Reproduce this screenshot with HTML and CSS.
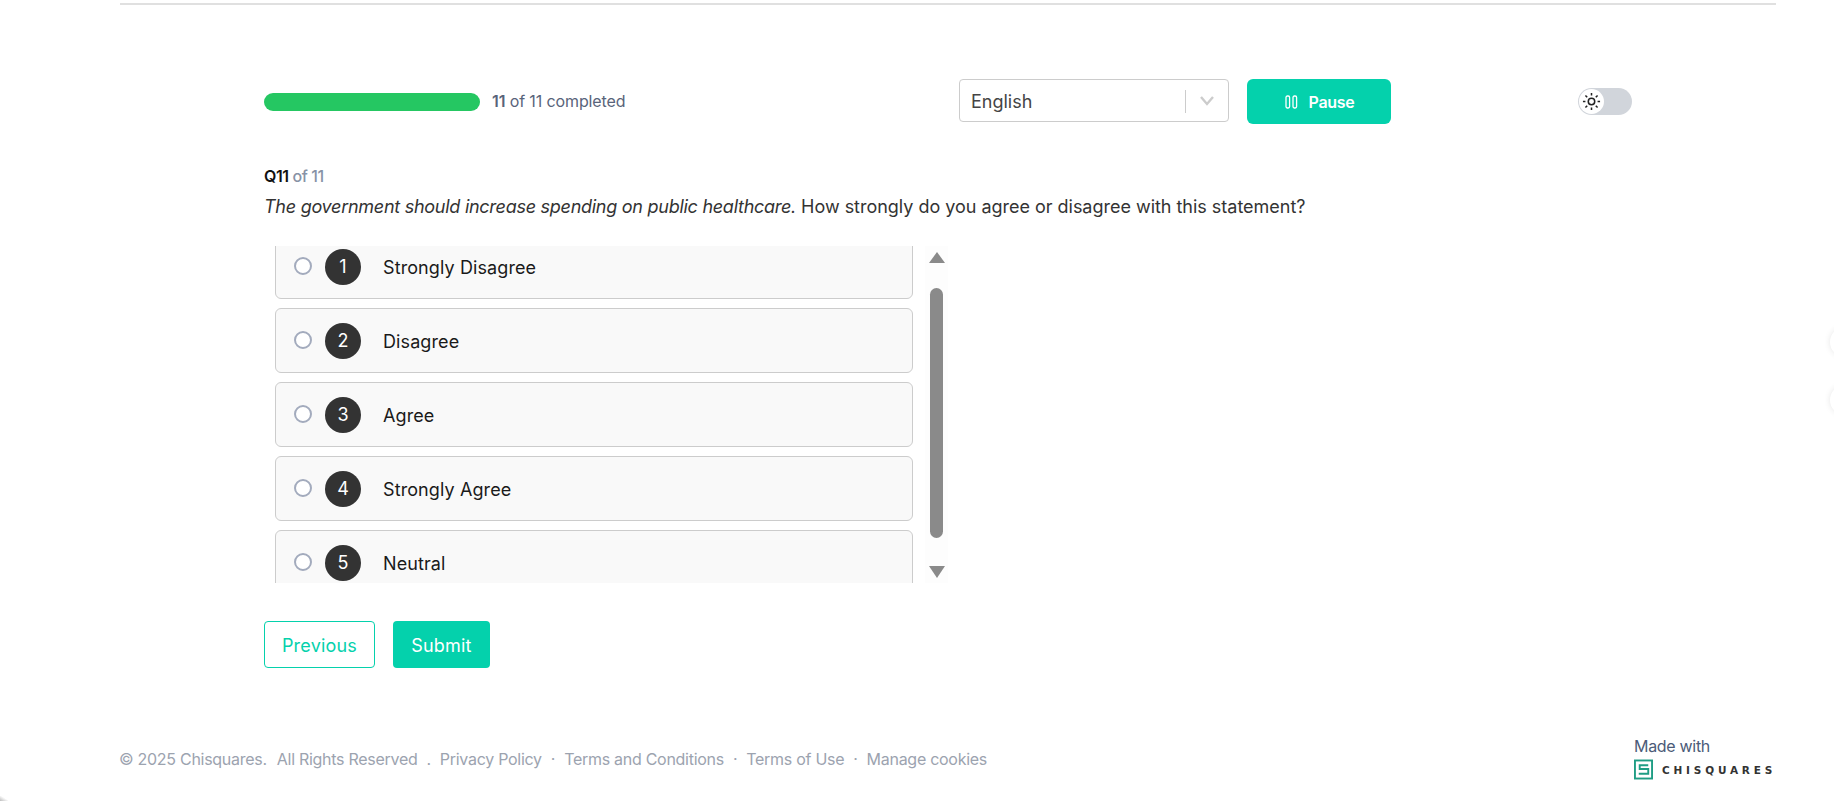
FILE: index.html
```html
<!DOCTYPE html>
<html lang="en">
<head>
    <meta charset="UTF-8">
    <title>Survey</title>
    <link rel="stylesheet" href="styles.css">
</head>
<body>

<div class="page">
    <div class="top-line"></div>

    <main class="survey">
        <div class="toolbar">
            <div class="progress-bar"></div>
            <div class="progress-text"><strong>11</strong> of 11 completed</div>
            <div class="select">
                <span class="select-value">English</span>
                <span class="select-sep"></span>
                <svg class="select-arrow" viewBox="0 0 20 20" width="20" height="20"><path d="M4 6 l6 7 6-7" fill="none" stroke="#ccc" stroke-width="2.4"/></svg>
            </div>
            <button class="pause-btn">
                <svg viewBox="0 0 14 16" width="14" height="16"><rect x="2" y="2" width="3.6" height="12" rx="1.4" fill="none" stroke="#fff" stroke-width="1.3"/><rect x="9" y="2" width="3.6" height="12" rx="1.4" fill="none" stroke="#fff" stroke-width="1.3"/></svg>
                Pause
            </button>
            <div class="toggle">
                <span class="toggle-thumb">
                    <svg viewBox="0 0 20 20" width="19" height="19"><circle cx="10" cy="10" r="3.4" fill="none" stroke="#222" stroke-width="1.6"/><path d="M10 1v2.6M10 16.4V19M1 10h2.6M16.4 10H19M3.6 3.6l1.9 1.9M14.5 14.5l1.9 1.9M16.4 3.6l-1.9 1.9M5.5 14.5l-1.9 1.9" stroke="#222" stroke-width="1.6"/></svg>
                </span>
            </div>
        </div>

        <div class="q-number"><strong>Q11</strong> of 11</div>
        <div class="q-text"><em>The government should increase spending on public healthcare.</em> How strongly do you agree or disagree with this statement?</div>

        <div class="answers">
            <div class="answer-list">
                <label class="answer"><span class="radio"></span><span class="num">1</span><span class="label">Strongly Disagree</span></label>
                <label class="answer"><span class="radio"></span><span class="num">2</span><span class="label">Disagree</span></label>
                <label class="answer"><span class="radio"></span><span class="num">3</span><span class="label">Agree</span></label>
                <label class="answer"><span class="radio"></span><span class="num">4</span><span class="label">Strongly Agree</span></label>
                <label class="answer"><span class="radio"></span><span class="num">5</span><span class="label">Neutral</span></label>
            </div>
            <div class="scrollbar">
                <span class="arrow-up"></span>
                <span class="thumb"></span>
                <span class="arrow-down"></span>
            </div>
        </div>

        <div class="actions">
            <button class="btn-outline">Previous</button>
            <button class="btn-solid">Submit</button>
        </div>
    </main>

    <footer class="footer">
        <div class="footer-links">
            <span>© 2025 Chisquares.</span>
            <span class="rights">All Rights Reserved</span>
            <span class="dot">.</span>
            <a>Privacy Policy</a>
            <span class="dot">·</span>
            <a>Terms and Conditions</a>
            <span class="dot">·</span>
            <a>Terms of Use</a>
            <span class="dot">·</span>
            <a>Manage cookies</a>
        </div>
        <div class="made-with">
            <div class="made-text">Made with</div>
            <div class="brand">
                <svg viewBox="0 0 20 21" width="19" height="21"><rect x="1" y="1" width="18" height="19" fill="none" stroke="#1f9d84" stroke-width="2"/><path d="M15 6H6v4h9v5H5" fill="none" stroke="#1f9d84" stroke-width="2"/></svg>
                <span class="brand-name">CHISQUARES</span>
            </div>
        </div>
    </footer>

    <span class="edge-tab edge-one"></span>
    <span class="edge-tab edge-two"></span>
    <span class="corner-shade"></span>
</div>

</body>
</html>
```

FILE: styles.css
```css
* {
    box-sizing: border-box;
}
html, body {
    margin: 0;
    height: 100%;
}
body {
    font-family: "Inter", "Liberation Sans", sans-serif;
    color: #1f1f1f;
    background: #fff;
    overflow: hidden;
}
button {
    font-family: inherit;
    cursor: pointer;
}
.page {
    position: relative;
    height: 801px;
    padding: 3px 58px 0 120px;
    overflow: hidden;
}
.top-line {
    height: 2px;
    background: #e0e0e0;
}
.survey {
    padding: 74px 0 0 144px;
}

/* top row */
.toolbar {
    display: flex;
    align-items: center;
    height: 45px;
}
.progress-bar {
    width: 216px;
    height: 18px;
    background: #25c762;
    border-radius: 9px;
}
.progress-text {
    margin-left: 12px;
    margin-top: -1px;
    width: 467px;
    font-size: 16px;
    letter-spacing: -0.12px;
    color: #59647a;
}
.progress-text strong {
    font-weight: 600;
}
.select {
    width: 270px;
    height: 43px;
    margin-top: -2px;
    display: flex;
    align-items: center;
    padding: 1px 11px 0;
    border: 1px solid #ccc;
    border-radius: 4px;
}
.select-value {
    flex: 1;
    font-size: 18px;
    color: #444;
}
.select-sep {
    width: 1px;
    height: 23px;
    background: #ccc;
    margin-right: 11px;
}
.pause-btn {
    width: 144px;
    height: 45px;
    margin-left: 18px;
    display: flex;
    align-items: center;
    justify-content: center;
    gap: 11px;
    border: none;
    border-radius: 6px;
    background: #04d1ac;
    color: #fff;
    font-size: 16px;
    font-weight: 600;
    letter-spacing: -0.3px;
}
.toggle {
    width: 54px;
    height: 27px;
    margin-left: 187px;
    padding: 1px;
    background: #d1d5db;
    border-radius: 14px;
}
.toggle-thumb {
    display: flex;
    align-items: center;
    justify-content: center;
    width: 25px;
    height: 25px;
    background: #fff;
    border-radius: 50%;
}

/* question */
.q-number {
    margin-top: 40px;
    font-size: 16px;
    line-height: 24px;
    letter-spacing: -0.4px;
    color: #8792a6;
    font-weight: 500;
}
.q-number strong {
    color: #111;
    font-weight: 600;
}
.q-text {
    margin-top: 5px;
    font-size: 18px;
    line-height: 27px;
    letter-spacing: -0.02px;
    color: #333;
}
.q-text em {
    letter-spacing: -0.27px;
}

/* answers */
.answers {
    display: flex;
    height: 337px;
    margin-top: 26px;
}
.answer-list {
    width: 661px;
    padding-left: 11px;
    overflow: hidden;
}
.answer {
    display: flex;
    align-items: center;
    width: 638px;
    height: 65px;
    margin-bottom: 9px;
    padding-left: 18px;
    background: #f9f9f9;
    border: 1px solid #ccc;
    border-radius: 6px;
}
.answer:first-child {
    margin-top: -12px;
}
.radio {
    width: 18px;
    height: 18px;
    margin-top: -2px;
    border: 2px solid #a3abbd;
    border-radius: 50%;
    background: #fff;
}
.num {
    display: flex;
    align-items: center;
    justify-content: center;
    width: 36px;
    height: 36px;
    margin-left: 13px;
    background: #333;
    color: #fff;
    border-radius: 50%;
    font-size: 18px;
}
.label {
    margin-left: 22px;
    padding-top: 2px;
    font-size: 18px;
    letter-spacing: 0.1px;
    color: #1a1a1a;
}

/* scrollbar drawn next to the list */
.scrollbar {
    width: 23px;
    display: flex;
    flex-direction: column;
    align-items: center;
    padding-top: 6px;
    background: #fdfdfd;
}
.arrow-up, .arrow-down {
    width: 0;
    height: 0;
    border-left: 8px solid transparent;
    border-right: 8px solid transparent;
}
.arrow-up {
    border-bottom: 11px solid #8a8a8a;
}
.arrow-down {
    margin-top: 28px;
    border-top: 12px solid #8a8a8a;
}
.thumb {
    width: 13px;
    height: 250px;
    margin-top: 25px;
    background: #8a8a8a;
    border-radius: 7px;
}

/* buttons */
.actions {
    display: flex;
    gap: 18px;
    margin-top: 38px;
}
.btn-outline, .btn-solid {
    height: 47px;
    padding: 2px 0 0;
    border-radius: 4px;
    font-size: 18px;
    font-weight: 400;
    letter-spacing: 0.2px;
}
.btn-outline {
    width: 111px;
    background: #fff;
    color: #04d1ac;
    border: 1px solid #04d1ac;
}
.btn-solid {
    width: 97px;
    background: #04d1ac;
    color: #fff;
    border: none;
}

/* footer */
.footer {
    display: flex;
    justify-content: space-between;
    align-items: flex-start;
    margin-top: 66px;
}
.footer-links {
    display: flex;
    gap: 9px;
    margin-top: 15px;
    margin-left: -1px;
    font-size: 16px;
    letter-spacing: -0.28px;
    color: #9ca3af;
}
.footer-links .rights {
    margin-left: 1px;
}
.made-with {
    width: 142px;
    padding-top: 2px;
}
.made-text {
    font-size: 16px;
    line-height: 20px;
    letter-spacing: -0.3px;
    color: #4b5b78;
}
.brand {
    display: flex;
    align-items: center;
    gap: 9px;
    margin-top: 3px;
}
.brand svg {
    flex-shrink: 0;
}
.brand-name {
    font-family: "DejaVu Sans", sans-serif;
    font-size: 10.5px;
    font-weight: 700;
    letter-spacing: 3.8px;
    white-space: nowrap;
    color: #333;
}

/* tabs peeking in from the right edge */
.edge-tab {
    position: absolute;
    right: -26px;
    width: 30px;
    height: 30px;
    background: #fff;
    border-radius: 50%;
    box-shadow: 0 0 6px rgba(0,0,0,0.1);
}
.edge-one {
    top: 327px;
}
.edge-two {
    top: 385px;
}
.corner-shade {
    position: absolute;
    left: 0;
    bottom: 0;
    width: 8px;
    height: 5px;
    background: linear-gradient(to top right, #bbb, transparent 60%);
}
```
